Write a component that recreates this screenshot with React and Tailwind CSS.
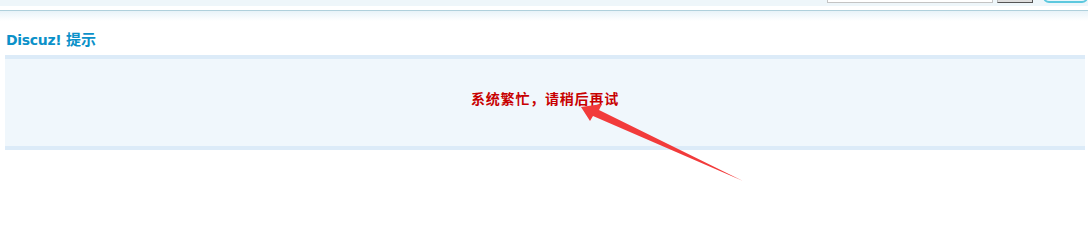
export default function App() {
  return (
    <div className="relative h-[224px] w-[1088px] overflow-hidden bg-white font-['DejaVu_Sans','Noto_Sans_CJK_SC',sans-serif]">
      {/* top toolbar strip, mostly cut off */}
      <div className="flex h-[6px] items-end overflow-hidden bg-[#eef6fa] pb-[3px]">
        <div className="ml-[827px] h-[20px] w-[166px] border border-[#c4c4c4] bg-white" />
        <div className="ml-[4px] h-[20px] w-[36px] border border-[#bbb] border-b-[#555] border-r-[#555] bg-[#dedede]" />
        <div className="ml-[10px] h-[20px] flex-1 rounded-b-[6px] border-2 border-[#5cc8de] bg-[#e8f7fb]" />
      </div>

      {/* nav bottom edge */}
      <div className="mt-[4px] h-px bg-[#afd0dc]" />
      <div className="h-[10px] bg-gradient-to-b from-[#e8f3f9] to-white" />

      {/* message */}
      <div className="ml-[5px] mr-[3px]">
        <h3 className="mt-[8px] h-[20px] pl-[1px] text-[14px] font-bold leading-[20px] tracking-[-0.3px] text-[#0b91c9]">
          Discuz!{' '}
          <span className="font-['Noto_Sans_CJK_SC',sans-serif] text-[15px] tracking-normal">提示</span>
        </h3>
        <div className="mt-[6px] h-[95px] border-y-4 border-[#dcebf8] bg-[#f0f7fc] pt-[29px]">
          <p className="text-center font-['Noto_Sans_CJK_SC',sans-serif] text-[14px] font-bold leading-[20px] tracking-[0.8px] text-[#c80000]">
            系统繁忙，请稍后再试
          </p>
        </div>
      </div>

      {/* annotation arrow */}
      <svg
        className="pointer-events-none absolute left-0 top-0"
        width="1088"
        height="224"
        viewBox="0 0 1088 224"
      >
        <polygon
          points="581,107 602,104 599,110 743,181 593,116 590,121"
          fill="#f23b3b"
        />
      </svg>
    </div>
  );
}
